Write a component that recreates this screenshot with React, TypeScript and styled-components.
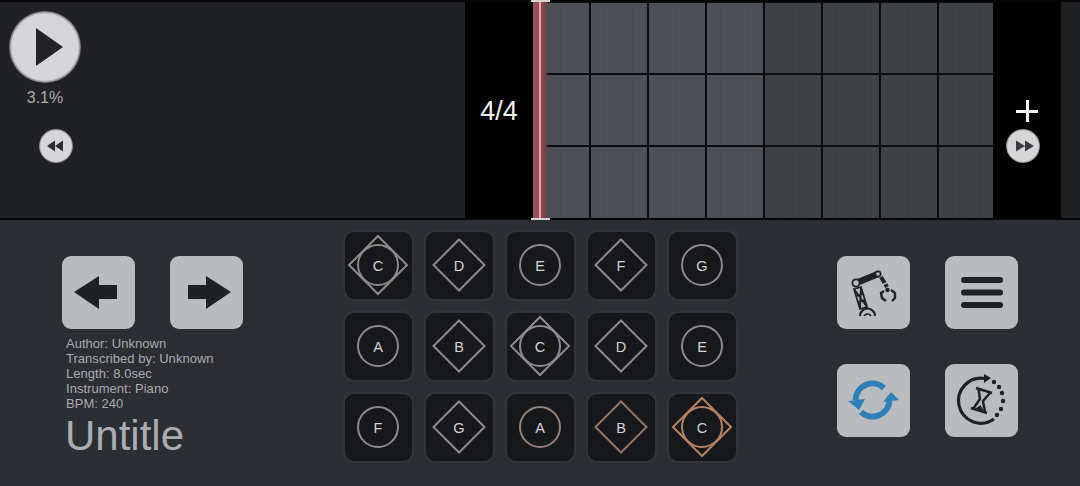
import React from "react"
import styled, { createGlobalStyle } from "styled-components"

const GlobalStyle = createGlobalStyle`
  html, body {
    margin: 0;
    padding: 0;
    background: #2b2e33;
    font-family: "Liberation Sans", Arial, sans-serif;
    overflow: hidden;
  }
`

const Page = styled.div`
  width: 1080px;
  height: 486px;
  display: flex;
  flex-direction: column;
  background: #2b2e33;
`

const Timeline = styled.div`
  position: relative;
  height: 216px;
  display: flex;
  background: #000;
  border-top: 2px solid #050506;
  border-bottom: 2px solid #050506;
`

const PlayPanel = styled.div`
  width: 465px;
  background: #1f2125;
  padding: 9px 0 0 9px;
  box-sizing: border-box;
`

const PlayButton = styled.button`
  width: 72px;
  height: 72px;
  padding: 0;
  border: 0;
  border-radius: 50%;
  background: radial-gradient(circle closest-side, #d6d5d7 0%, #d6d5d7 92%, #66666a 100%);
  display: block;
`

const Percent = styled.div`
  width: 72px;
  margin-top: 6px;
  text-align: center;
  font-size: 16px;
  line-height: 17px;
  color: #a9abae;
`

const RoundButton = styled.button<{ $left: number; $top: number }>`
  width: 34px;
  height: 34px;
  padding: 0;
  border: 0;
  border-radius: 50%;
  background: radial-gradient(circle closest-side, #d6d5d7 0%, #d6d5d7 90%, #77777b 100%);
  display: block;
  margin-left: ${(p) => p.$left}px;
  margin-top: ${(p) => p.$top}px;
`

const Meter = styled.div`
  width: 68px;
  height: 100%;
  display: flex;
  align-items: center;
  justify-content: center;
  color: #f2f2f2;
  font-size: 27px;
  padding-top: 2px;
  box-sizing: border-box;
`

const Measures = styled.div`
  width: 460px;
  height: 216px;
  padding-top: 1px;
  box-sizing: border-box;
  display: grid;
  grid-template-columns: repeat(7, 56px) 54px;
  grid-template-rows: 70px 70px 71px;
  gap: 2px;
  background: #0b0c10;
`

const Cell = styled.div<{ $dim: boolean }>`
  background-color: ${(p) => (p.$dim ? "#3e4145" : "#4d5057")};
  background-image: repeating-linear-gradient(
    90deg,
    rgba(255, 255, 255, 0) 0,
    rgba(255, 255, 255, 0) 13px,
    rgba(0, 0, 0, 0.05) 13px,
    rgba(0, 0, 0, 0.05) 14px
  );
`

const EndZone = styled.div`
  width: 68px;
  height: 100%;
  position: relative;
  padding-top: 127px;
  box-sizing: border-box;
`

const Plus = styled.div`
  position: absolute;
  left: 23px;
  top: 98px;
  width: 22px;
  height: 22px;
  &::before,
  &::after {
    content: "";
    position: absolute;
    background: #f5f5f5;
  }
  &::before {
    left: 0;
    right: 0;
    top: 9.5px;
    height: 3px;
  }
  &::after {
    top: 0;
    bottom: 0;
    left: 9.5px;
    width: 3px;
  }
`

const EndPanel = styled.div`
  flex: 1;
  background: #1f2125;
`

const Playhead = styled.div`
  position: absolute;
  left: 533px;
  top: -2px;
  bottom: -2px;
  width: 15px;
  background: linear-gradient(90deg, #97505a 0, #97505a 45%, #7a3f49 80%, rgba(100, 70, 78, 0.3) 100%);
  &::before {
    content: "";
    position: absolute;
    left: 6px;
    top: 0;
    bottom: 0;
    width: 2px;
    background: #f0a3ac;
  }
`

const PlayheadCap = styled.div<{ $bottom?: boolean }>`
  position: absolute;
  left: -2px;
  width: 19px;
  height: 2px;
  background: #d8d4d2;
  ${(p) => (p.$bottom ? "bottom: 0;" : "top: 0;")}
`

const Controls = styled.div`
  flex: 1;
  display: flex;
`

const LeftColumn = styled.div`
  width: 343px;
  padding: 36px 0 0 62px;
  box-sizing: border-box;
`

const SquareRow = styled.div`
  display: flex;
  gap: 35px;
`

const SquareButton = styled.button`
  width: 73px;
  height: 73px;
  padding: 0;
  border: 0;
  border-radius: 9px;
  background: #b9bbbf;
  display: block;
`

const Info = styled.div`
  margin: 7px 0 0 4px;
  font-size: 13px;
  letter-spacing: 0.03px;
  line-height: 15px;
  color: #a8abaf;
`

const Title = styled.div`
  margin: 1px 0 0 3px;
  font-size: 42px;
  line-height: 48px;
  color: #a9acb0;
`

const PadGrid = styled.div`
  padding-top: 10px;
  display: grid;
  grid-template-columns: repeat(5, 71px);
  grid-auto-rows: 71px;
  gap: 10px;
  height: max-content;
`

const Pad = styled.div`
  position: relative;
  box-sizing: border-box;
  border: 2px solid #313438;
  border-radius: 11px;
  background: #17181b;
  display: flex;
  align-items: center;
  justify-content: center;
  font-size: 14.5px;
  color: #d4d4d4;
`

const PadShape = styled.svg`
  position: absolute;
  left: -2px;
  top: -2px;
  width: 71px;
  height: 71px;
`

const PadLabel = styled.span`
  position: relative;
  margin-left: -1px;
`

const RightColumn = styled.div`
  margin-left: 99px;
  padding-top: 36px;
  display: grid;
  grid-template-columns: 73px 73px;
  grid-auto-rows: 73px;
  gap: 35px;
  height: max-content;
`

const Icon = styled.svg`
  display: block;
  width: 73px;
  height: 73px;
`

type Shape = "circle" | "diamond" | "both"

const pads: { note: string; shape: Shape; color?: string }[] = [
  { note: "C", shape: "both" },
  { note: "D", shape: "diamond" },
  { note: "E", shape: "circle" },
  { note: "F", shape: "diamond" },
  { note: "G", shape: "circle" },
  { note: "A", shape: "circle" },
  { note: "B", shape: "diamond" },
  { note: "C", shape: "both" },
  { note: "D", shape: "diamond" },
  { note: "E", shape: "circle" },
  { note: "F", shape: "circle" },
  { note: "G", shape: "diamond" },
  { note: "A", shape: "circle", color: "#94817a" },
  { note: "B", shape: "diamond", color: "#917465" },
  { note: "C", shape: "both", color: "#b5815f" },
]

const PadMark = ({ shape, color = "#8b8b8b" }: { shape: Shape; color?: string }) => {
  const d = shape === "both" ? 29 : 25.5
  return (
    <PadShape viewBox="0 0 71 71" fill="none" stroke={color} strokeWidth="2">
      {shape !== "diamond" && <circle cx="35" cy="35" r="20" />}
      {shape !== "circle" && (
        <polygon points={`35,${35 - d} ${35 + d},35 35,${35 + d} ${35 - d},35`} />
      )}
    </PadShape>
  )
}

const RobotIcon = () => (
  <Icon viewBox="0 0 73 73">
    <g fill="none" stroke="#1f2125">
      <line x1="19" y1="27" x2="41" y2="18" strokeWidth="6.500" strokeLinecap="round" />
      <circle cx="19" cy="27" r="3.6" fill="#b9bbbf" strokeWidth="1.8" />
      <circle cx="41" cy="18" r="2.6" fill="#b9bbbf" strokeWidth="1.6" />
      <path d="M17 33L24 31L30 51L23 53ZM17 33L30 51M24 31L23 53M19 40L26 38M21 46L28 44" strokeWidth="1.8" />
      <path d="M23 60a7.500 7.500 0 0 1 15 0" strokeWidth="2.200" />
      <path d="M27 60a4 4 0 0 1 7 0" strokeWidth="1.6" />
      <line x1="44" y1="21" x2="50" y2="31" strokeWidth="4" strokeDasharray="7 1.500" />
      <circle cx="50.500" cy="34" r="2.200" fill="#1f2125" stroke="none" />
      <path d="M47 35L44 37L45 42L49 45" strokeWidth="2.400" />
      <path d="M54 34L58 37L58 42L55 45" strokeWidth="2.400" />
    </g>
  </Icon>
)

const SyncIcon = () => (
  <Icon viewBox="0 0 73 73">
    <g fill="none" stroke="#2e7fb7" strokeWidth="6">
      <path d="M47 24A17 17 0 0 0 18.500 36" />
      <path d="M24 48A17 17 0 0 0 52.500 37" />
    </g>
    <polygon points="11,37 28,35 22,46" fill="#2e7fb7" />
    <polygon points="54,28 46,38 62,36" fill="#2e7fb7" />
  </Icon>
)

const HourglassIcon = () => (
  <Icon viewBox="0 0 73 73">
    <path d="M40 14.500A22.500 22.500 0 1 0 49 55" fill="none" stroke="#1f2125" strokeWidth="3.200" />
    <polygon points="39,10 46,14 39,19" fill="#1f2125" />
    {[
      [49, 18],
      [54, 23],
      [57, 29],
      [58, 37],
      [56, 45],
      [52, 51],
    ].map(([x, y]) => (
      <circle key={x} cx={x} cy={y} r="2.200" fill="#1f2125" />
    ))}
    <path
      d="M31 24L47 29M26 44L42 49M33.500 25L35 35L28 45M45 29L38 37L40 48"
      fill="none"
      stroke="#1f2125"
      strokeWidth="2.500"
    />
    <polygon points="30,45 39,47.500 35.500,41" fill="#1f2125" />
  </Icon>
)

const cells = Array.from({ length: 24 }, (_, i) => i % 8 >= 4)

export default function App() {
  return (
    <Page>
      <GlobalStyle />
      <Timeline>
        <PlayPanel>
          <PlayButton aria-label="Play">
            <svg width="72" height="72" viewBox="0 0 72 72" style={{ display: "block" }}>
              <polygon points="27,17 54,36 27,55" fill="#232327" />
            </svg>
          </PlayButton>
          <Percent>3.1%</Percent>
          <RoundButton $left={30} $top={23} aria-label="Rewind">
            <svg width="34" height="34" viewBox="0 0 34 34" style={{ display: "block" }}>
              <path d="M8 17L16 11.500V22.500ZM16 17L24 11.500V22.500Z" fill="#2b2b30" />
            </svg>
          </RoundButton>
        </PlayPanel>
        <Meter>4/4</Meter>
        <Measures>
          {cells.map((dim, i) => (
            <Cell key={i} $dim={dim} />
          ))}
        </Measures>
        <EndZone>
          <Plus />
          <RoundButton $left={13} $top={0} aria-label="Forward">
            <svg width="34" height="34" viewBox="0 0 34 34" style={{ display: "block" }}>
              <path d="M10 11.500L19 17L10 22.500ZM19 11.500L28 17L19 22.500Z" fill="#3a3a40" />
            </svg>
          </RoundButton>
        </EndZone>
        <EndPanel />
        <Playhead>
          <PlayheadCap />
          <PlayheadCap $bottom />
        </Playhead>
      </Timeline>
      <Controls>
        <LeftColumn>
          <SquareRow>
            <SquareButton aria-label="Previous">
              <Icon viewBox="0 0 73 73">
                <polygon points="12,36 37,20 37,29 55,29 55,43 37,43 37,53" fill="#1f2125" />
              </Icon>
            </SquareButton>
            <SquareButton aria-label="Next">
              <Icon viewBox="0 0 73 73">
                <polygon points="61,36 36,20 36,29 18,29 18,43 36,43 36,53" fill="#1f2125" />
              </Icon>
            </SquareButton>
          </SquareRow>
          <Info>
            <div>Author: Unknown</div>
            <div>Transcribed by: Unknown</div>
            <div>Length: 8.0sec</div>
            <div>Instrument: Piano</div>
            <div>BPM: 240</div>
          </Info>
          <Title>Untitle</Title>
        </LeftColumn>
        <PadGrid>
          {pads.map((pad, i) => (
            <Pad key={i}>
              <PadMark shape={pad.shape} color={pad.color} />
              <PadLabel>{pad.note}</PadLabel>
            </Pad>
          ))}
        </PadGrid>
        <RightColumn>
          <SquareButton aria-label="Robot">
            <RobotIcon />
          </SquareButton>
          <SquareButton aria-label="Menu">
            <Icon viewBox="0 0 73 73">
              <g stroke="#1f2125" strokeWidth="6" strokeLinecap="round">
                <line x1="19" y1="24" x2="55" y2="24" />
                <line x1="19" y1="36.500" x2="55" y2="36.500" />
                <line x1="19" y1="49" x2="55" y2="49" />
              </g>
            </Icon>
          </SquareButton>
          <SquareButton aria-label="Sync">
            <SyncIcon />
          </SquareButton>
          <SquareButton aria-label="History">
            <HourglassIcon />
          </SquareButton>
        </RightColumn>
      </Controls>
    </Page>
  )
}
